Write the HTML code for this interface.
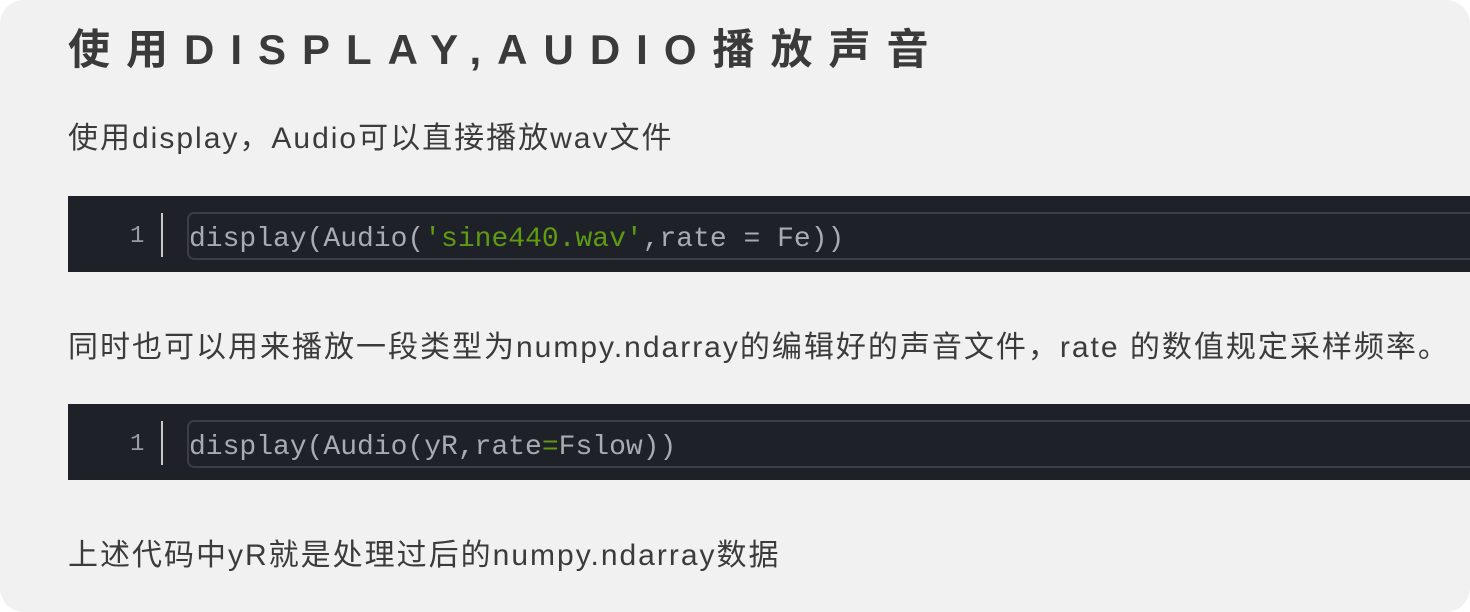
<!DOCTYPE html>
<html><head><meta charset="utf-8"><style>
html,body{margin:0;padding:0;background:#fff;}
.card{position:absolute;left:0;top:0;width:1470px;height:612px;background:#f1f1f1;border-radius:24px;overflow:hidden;font-family:"Liberation Sans","Noto Sans CJK SC",sans-serif;color:#3b3b3b;}
h1{position:absolute;left:68px;top:20px;margin:0;font-size:42px;font-weight:bold;letter-spacing:16px;white-space:nowrap;line-height:60px;color:#3a3a3a;}
.p{position:absolute;left:68px;font-size:30px;letter-spacing:2px;white-space:nowrap;line-height:40px;}
.code{position:absolute;left:68px;width:1402px;background:#1f2129;}
.ln{position:absolute;left:130px;font-family:"Liberation Mono",monospace;font-size:24px;color:#9a9ca3;}
.bar{position:absolute;left:161px;width:2px;background:#c8c8c8;}
.box{position:absolute;left:187px;width:1300px;border:2px solid #3d3e44;border-radius:7px;box-sizing:border-box;}
.ct{position:absolute;left:189px;font-family:"Liberation Mono",monospace;font-size:28px;color:#a9abb2;white-space:pre;}
.s{color:#5f9b12}
</style></head><body><div class="card">
<h1>使用DISPLAY,AUDIO播放声音</h1>
<div class="p" style="top:119px">使用display，Audio可以直接播放wav文件</div>
<div class="code" style="top:196px;height:76px"></div>
<div class="box" style="top:212px;height:48px"></div>
<div class="bar" style="top:213px;height:44px"></div>
<div class="ln" style="top:223px">1</div>
<div class="ct" style="top:224px">display(Audio(<span class="s">'sine440.wav'</span>,rate = Fe))</div>
<div class="p" style="top:328px">同时也可以用来播放一段类型为numpy.ndarray的编辑好的声音文件，rate 的数值规定采样频率。</div>
<div class="code" style="top:404px;height:76px"></div>
<div class="box" style="top:420px;height:48px"></div>
<div class="bar" style="top:421px;height:44px"></div>
<div class="ln" style="top:431px">1</div>
<div class="ct" style="top:432px">display(Audio(yR,rate<span class="s">=</span>Fslow))</div>
<div class="p" style="top:536px">上述代码中yR就是处理过后的numpy.ndarray数据</div>
</div></body></html>
